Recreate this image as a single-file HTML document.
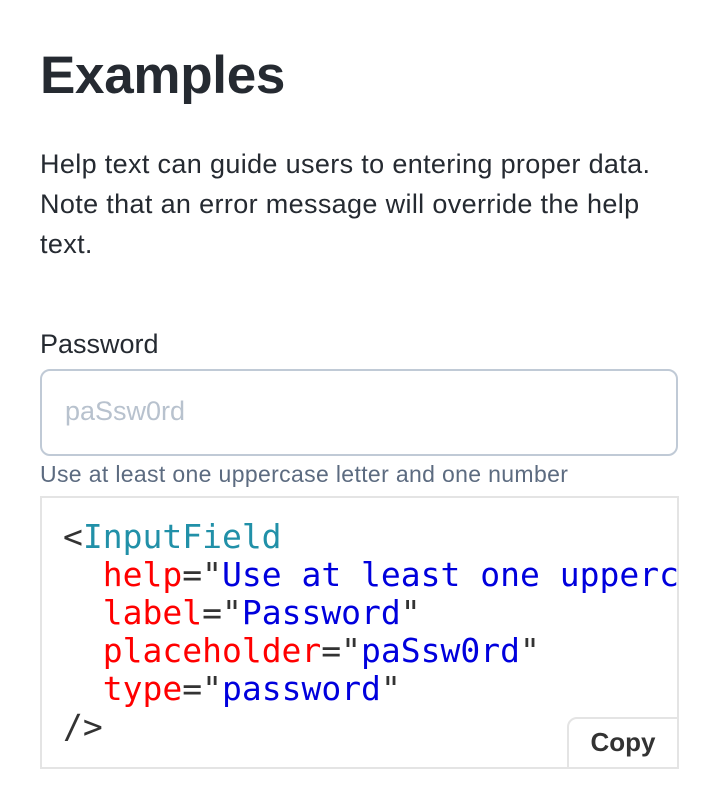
<!DOCTYPE html>
<html><head><style>
body{margin:0;background:#fff;width:718px;height:808px;overflow:hidden;font-family:"Liberation Sans",sans-serif;color:#252a31}
h1{position:absolute;left:40px;top:44px;margin:0;font-size:53px;font-weight:700;line-height:64px;letter-spacing:-0.3px}
.p{position:absolute;left:40px;top:144px;width:625px;font-size:27px;line-height:40px;letter-spacing:0.35px}
.lbl{position:absolute;left:40px;top:327px;font-size:27px;line-height:34px}
.inp{position:absolute;left:40px;top:369px;width:634px;height:83px;border:2px solid #c0cad6;border-radius:10px}
.ph{position:absolute;left:23px;top:25px;font-size:27px;color:#b8c2ce}
.help{position:absolute;left:40px;top:461px;font-size:23px;color:#5c6b80;letter-spacing:0.35px}
.code{position:absolute;left:40px;top:496px;width:635px;height:269px;border:2px solid #e4e4e4;overflow:hidden}
pre{margin:0;position:absolute;left:21px;top:20px;font-family:"DejaVu Sans Mono",monospace;font-size:33px;line-height:38px;color:#333}
.t{color:#2190a8}.a{color:#f00}.s{color:#00d}
.copy{position:absolute;right:-2px;bottom:-2px;width:108px;height:48px;border:2px solid #e4e4e4;border-top-left-radius:10px;background:#fff;font-weight:700;font-size:26px;line-height:46px;text-align:center;color:#333}
</style></head><body>
<h1>Examples</h1>
<div class="p">Help text can guide users to entering proper data. Note that an error message will override the help text.</div>
<div class="lbl">Password</div>
<div class="inp"><div class="ph">paSsw0rd</div></div>
<div class="help">Use at least one uppercase letter and one number</div>
<div class="code"><pre>&lt;<span class="t">InputField</span>
  <span class="a">help</span>="<span class="s">Use at least one uppercase letter and one number</span>"
  <span class="a">label</span>="<span class="s">Password</span>"
  <span class="a">placeholder</span>="<span class="s">paSsw0rd</span>"
  <span class="a">type</span>="<span class="s">password</span>"
/&gt;</pre><div class="copy">Copy</div></div>
</body></html>
